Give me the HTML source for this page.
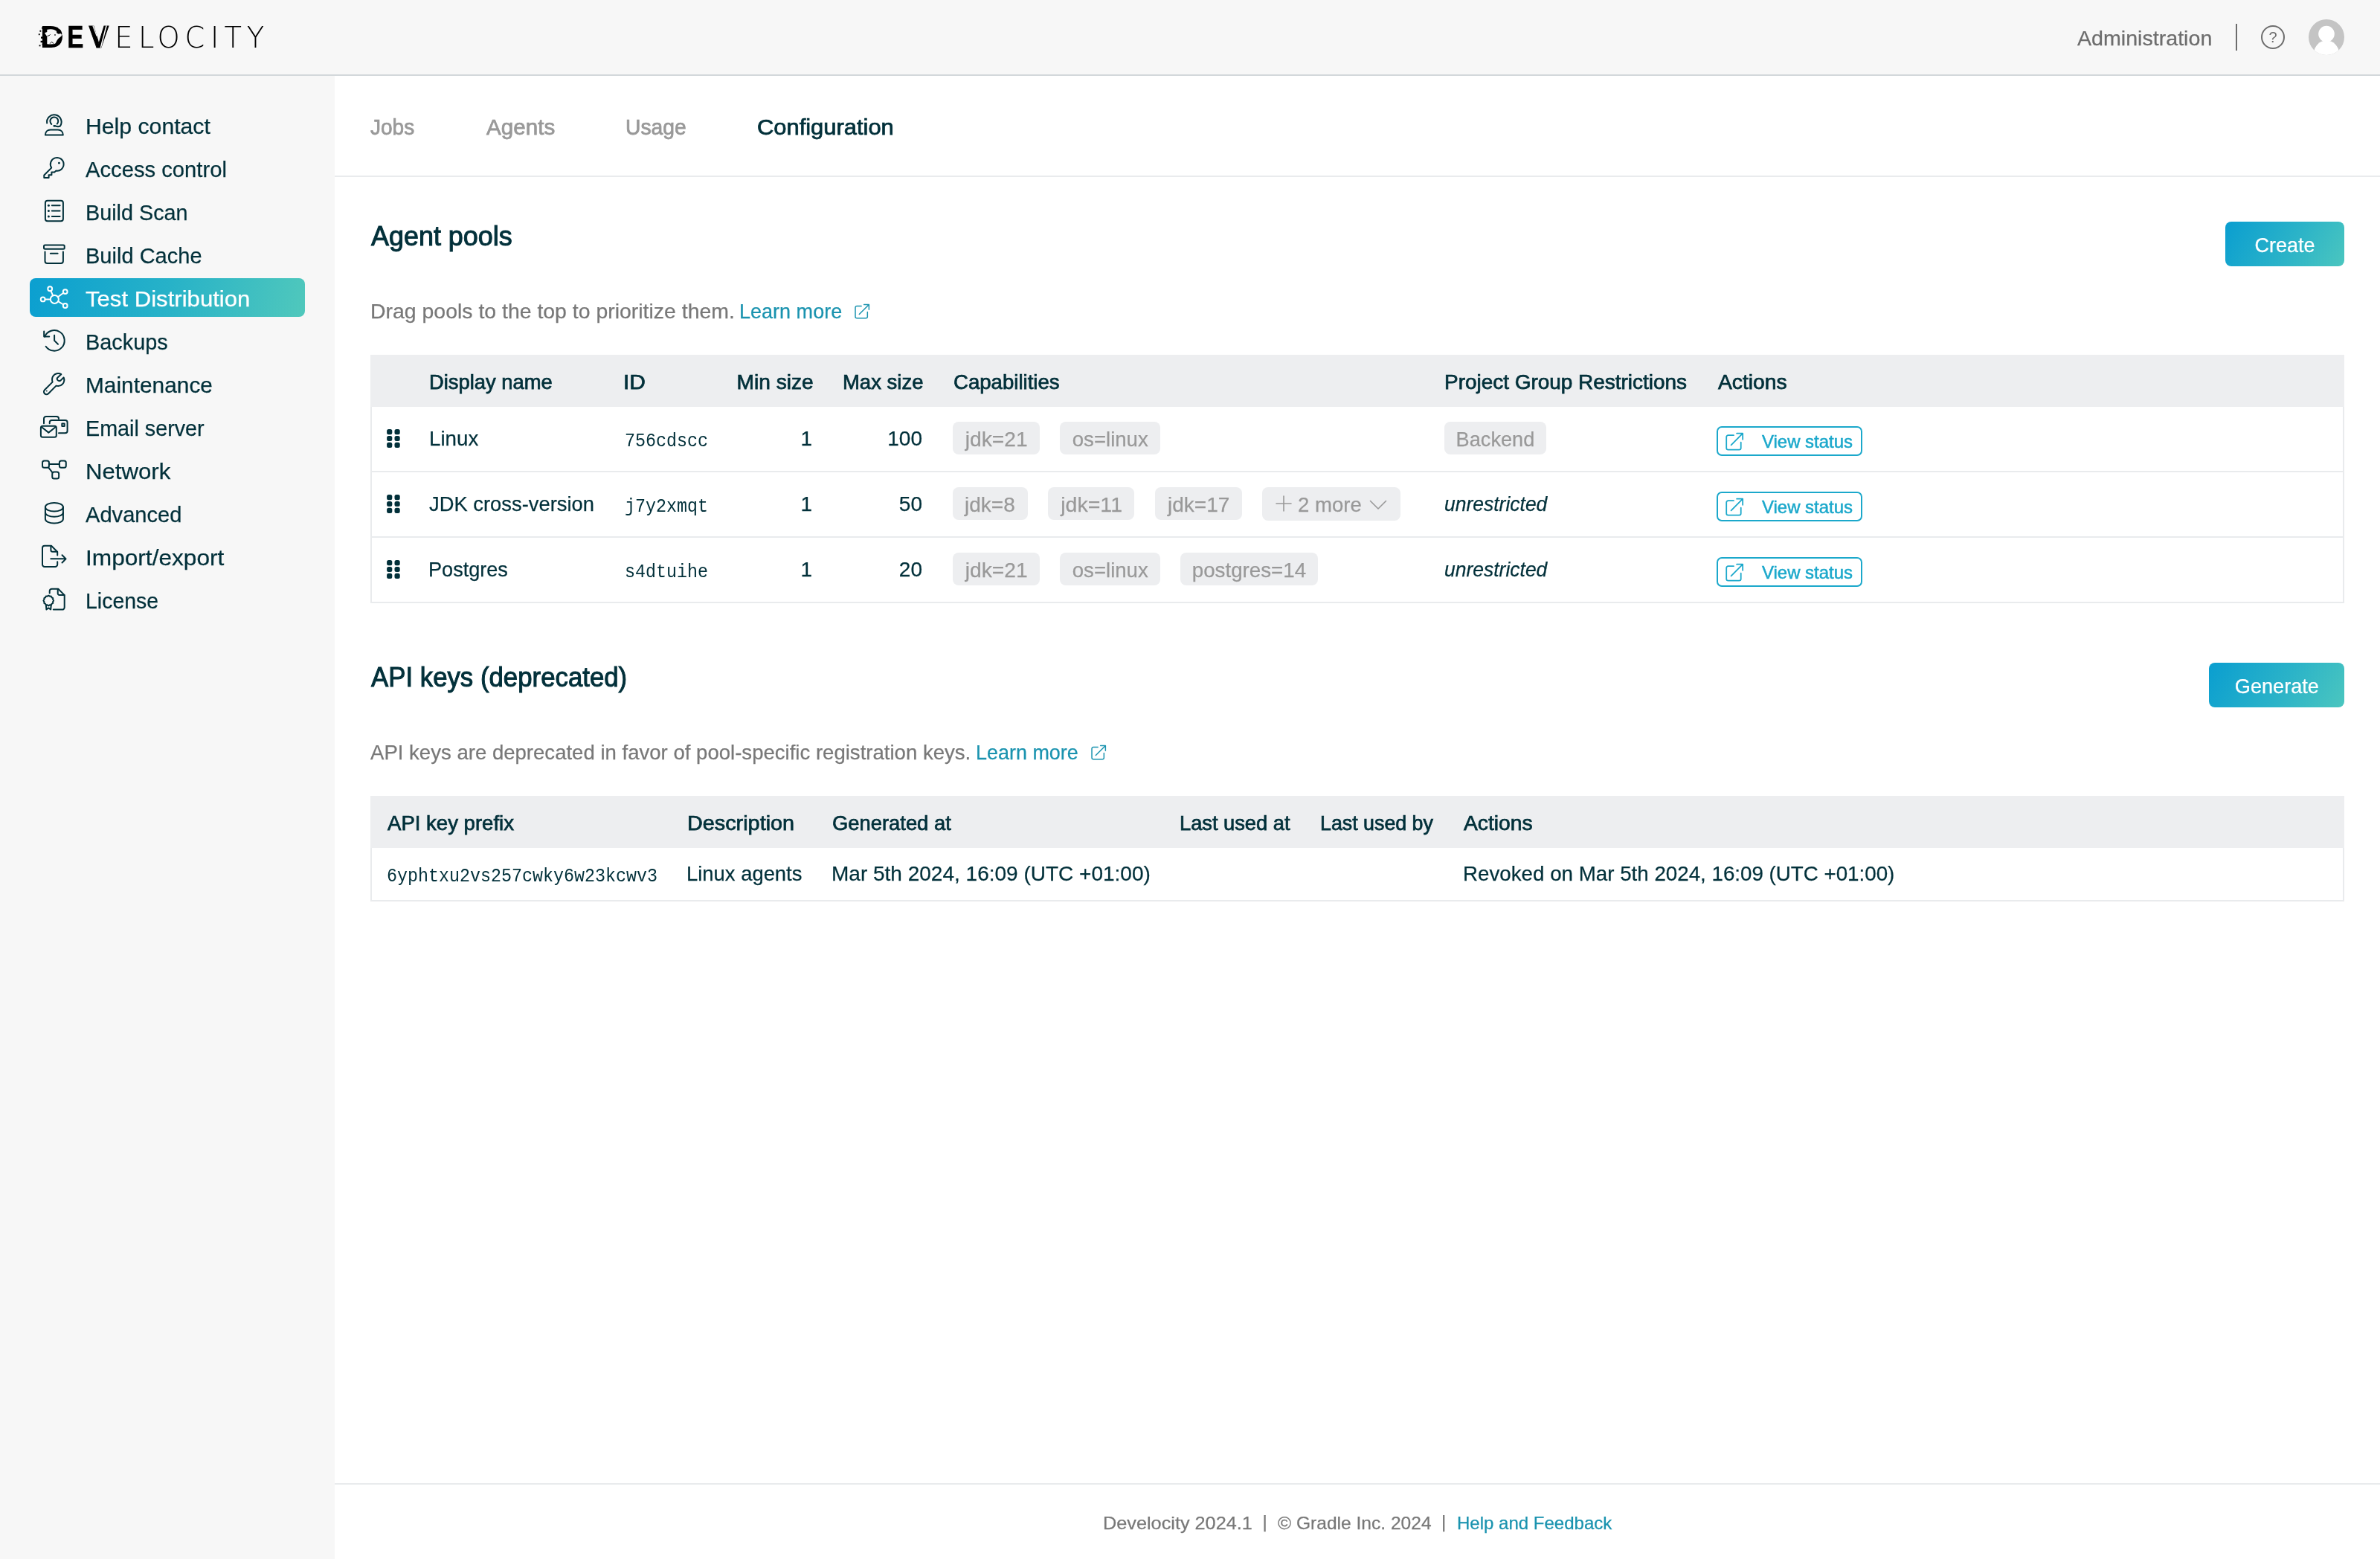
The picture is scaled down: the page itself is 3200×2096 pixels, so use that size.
<!DOCTYPE html>
<html lang="en">
<head>
<meta charset="utf-8">
<title>Test Distribution configuration | Develocity</title>
<style>
*{box-sizing:border-box;margin:0;padding:0}
html,body{width:3200px;height:2096px;overflow:hidden;background:#fff}
body{font-family:"Liberation Sans",sans-serif;color:#02303a;position:relative;font-size:28px;line-height:1;-webkit-text-stroke:0.25px}
a{color:inherit;text-decoration:none}
ul{list-style:none}
svg{display:block;overflow:visible}
/* promote the main regions so text is rasterised with greyscale anti-aliasing */
header.top,nav.side,main{will-change:transform}
.abs{position:absolute;white-space:nowrap}
.med{-webkit-text-stroke:0.75px currentColor}

/* header */
header.top{position:absolute;left:0;top:0;width:3200px;height:102px;background:#f7f7f7;border-bottom:2px solid #d3d8db}
.logo{position:absolute;left:40px;top:20px;width:330px;height:60px}
.admin{left:2793px;top:32px;font-size:28px;line-height:40px;color:#6d6d6d}
.vsep{position:absolute;left:3006px;top:32px;width:2px;height:36px;background:#6d6d6d}
.help{position:absolute;left:3040px;top:34px;width:32px;height:32px}
.avatar{position:absolute;left:3104px;top:26px;width:48px;height:48px}

/* sidebar */
nav.side{position:absolute;left:0;top:102px;width:450px;height:1994px;background:#f7f7f7}
nav.side li{position:absolute;left:40px;width:370px;height:52px;border-radius:8px}
nav.side li a{display:block;height:52px;position:relative}
nav.side li svg{position:absolute;left:13px;top:6px;width:40px;height:40px;fill:none;stroke:#02303a;stroke-width:2;stroke-linecap:round;stroke-linejoin:round}
nav.side li span{position:absolute;left:75px;top:0;font-size:30px;line-height:55px;white-space:nowrap}
nav.side li.active{background:linear-gradient(103deg,#0b9fd0 0%,#27b2c8 50%,#50c8bc 100%)}
nav.side li.active span{color:#fff}
nav.side li.active svg{stroke:#fff}

/* main */
main{position:absolute;left:450px;top:102px;width:2750px;height:1994px;background:#fff}
.tabs{position:absolute;left:0;top:0;width:2750px;height:136px;border-bottom:2px solid #e9ebed}
.tabs a{position:absolute;top:38.6px;font-size:30px;line-height:60px;color:#999;white-space:nowrap}
.tabs a.on{color:#02303a}

section{position:absolute;left:48px;width:2654px}
h2{position:absolute;left:0;font-size:36px;line-height:50px;font-weight:normal;white-space:nowrap;-webkit-text-stroke:1px #02303a}
.btn{position:absolute;right:0;height:60px;border-radius:8px;background:linear-gradient(120deg,#0a9ed0 0%,#2bb3c8 55%,#4bc6bf 100%);color:#fff;font-size:28px;line-height:64px;text-align:center;white-space:nowrap}
p.desc{position:absolute;left:0;width:2654px;height:40px;font-size:28px;line-height:40px;color:#787878;white-space:nowrap}
p.desc>span{position:absolute;left:-0.3px;top:0}
p.desc a{position:absolute;top:0}
p.desc a{color:#1a93af}
p.desc a.x{top:8.8px}
p.desc svg{width:20.4px;height:20.4px;fill:none;stroke:#1a93af;stroke-width:1.45;stroke-linecap:round;stroke-linejoin:round}

table{position:absolute;left:0;border-collapse:separate;border-spacing:0;table-layout:fixed;width:2654px;font-size:28px}
th{height:70px;background:#edeef0;text-align:left;font-weight:normal;-webkit-text-stroke:0.75px #02303a;padding:4px 0 0 20px;white-space:nowrap;vertical-align:middle;line-height:40px}
td{padding:0 0 0 20px;white-space:nowrap;vertical-align:middle;border-bottom:2px solid #e9ebed;line-height:40px}
td:first-child{border-left:2px solid #e9ebed}
td:last-child{border-right:2px solid #e9ebed}
th.num{text-align:right;padding:4px 20px 0 0}
td.num{text-align:right;padding:0 20px 0 0}
.mono{font-family:"Liberation Mono",monospace;font-size:25.4px;-webkit-text-stroke:0}
.mono .m{display:inline-block;transform:scaleX(.9186);transform-origin:0 50%}
td.mono{padding-top:7px}
.chip{display:inline-block;height:44px;border-radius:8px;background:#edeef0;color:#999;padding:0 16px;line-height:47px;margin-right:27.4px;vertical-align:middle;position:relative;top:-1px;white-space:nowrap}
.chip svg{display:inline-block}
i.un{font-style:italic}
.vs{display:inline-block;position:relative;top:2px;width:196px;height:40px;border:2px solid #1ba8cb;border-radius:7px;color:#1ba8cb;font-size:24px;vertical-align:middle;-webkit-text-stroke:0.5px #1ba8cb}
.vs svg{position:absolute;left:10px;top:6px;width:24.4px;height:24.4px;fill:none;stroke:#1ba8cb;stroke-width:1.45;stroke-linecap:round;stroke-linejoin:round}
.vs span{position:absolute;left:59.4px;top:0;line-height:37px;white-space:nowrap}
.grip{display:block;width:18px;height:25px;position:relative;top:-0.8px}

footer{position:absolute;left:0;top:1892px;width:2750px;height:102px;border-top:2px solid #e9ebed;font-size:24px;color:#787878;white-space:nowrap}
footer .abs{top:32px;line-height:40px}
footer .bar{top:30px}
footer a{color:#1a93af}
.chip{padding:0;text-align:center}
.chip.more{position:relative;text-align:left}
.t1 td{height:88px}
.t2 td{height:72px}
.t1 td.g{padding-left:20px}
.t1 td.caps{padding-left:21px}
</style>
</head>
<body>
<header class="top">
  <a class="logo" href="#" aria-label="Develocity">
    <svg width="330" height="60" viewBox="0 0 330 60">
      <g fill="#000" font-family="'Liberation Sans',sans-serif" font-weight="bold" font-size="42">
        <text transform="translate(14.1,43.9) scale(1.05,1)">D</text>
        <text transform="translate(50.3,43.9) scale(0.79,1)" stroke="#000" stroke-width="0.5">E</text>
        <text transform="translate(79.5,43.9) scale(0.955,1)" stroke="#000" stroke-width="1.1" stroke-linejoin="miter">V</text>
      </g>
      <!-- elephant cut-out inside the D -->
      <path d="M20 24.35 L25.2 22.2 L28.5 21.8 L32.2 22.7 L36.5 24.6 L38.8 25.8 L41.6 24.9 L43 26.7 L42.6 28.6 L38.8 31.4 L36.5 34.2 L34.6 38.3 L32.6 39.2 L24.9 39.2 L24.7 29.1 L22.8 28.6 Z" fill="#f7f7f7"/>
      <path d="M24.9 20.4 C28 19.6 30.8 19.9 33.2 20.9 C34.8 21.6 36 22.6 36.9 23.6" fill="none" stroke="#f7f7f7" stroke-width="1.2"/>
      <ellipse cx="39.1" cy="22.4" rx="2.9" ry="2.7" fill="#000"/>
      <path d="M38.4 17.9 C42.6 18 45.2 22.4 43.6 27.2" fill="none" stroke="#f7f7f7" stroke-width="0.9"/>
      <path d="M27.2 38.6 L29.4 36.3 L32.2 38.6" fill="none" stroke="#000" stroke-width="1"/>
      <path d="M23.6 28.4 C25.4 28.2 26.9 27.4 27.6 26.4" fill="none" stroke="#000" stroke-width="1"/>
      <circle cx="34" cy="26.9" r="0.95" fill="#222"/>
      <g fill="#000">
        <rect x="13.4" y="20.8" width="1.9" height="1.9"/><rect x="11.8" y="25.3" width="1.9" height="1.9"/>
        <rect x="15" y="29.4" width="2.4" height="2.4"/><rect x="14.6" y="34.8" width="2.6" height="2.4"/>
        <rect x="12.6" y="40.4" width="1.9" height="1.9"/><rect x="16.2" y="16.4" width="2" height="2.4"/>
        <rect x="17" y="22.6" width="1.6" height="2"/><rect x="16.6" y="38.6" width="1.6" height="2"/>
      </g>
      <!-- stripes in the V -->
      <path d="M84.9 14.4 L90.2 28.4" stroke="#f7f7f7" stroke-width="1.3" fill="none"/>
      <path d="M103.1 14.4 L95.3 44.4" stroke="#f7f7f7" stroke-width="1.6" fill="none"/>
      <g fill="#000" font-family="'DejaVu Sans',sans-serif" font-weight="200" font-size="38.4">
        <text x="114.2" y="43.8">E</text>
        <text x="145.9" y="43.8">L</text>
        <text x="171.6" y="43.8">O</text>
        <text x="208.4" y="43.8">C</text>
        <text x="242.9" y="43.8">I</text>
        <text x="261.5" y="43.8">T</text>
        <text x="291.7" y="43.8">Y</text>
      </g>
    </svg>
  </a>
  <a class="abs admin" href="#"><span style="display:inline-block;transform-origin:left 50%;transform:scaleX(1.0220)">Administration</span></a>
  <span class="vsep"></span>
  <a class="help" href="#" aria-label="Help">
    <svg width="32" height="32" viewBox="0 0 32 32">
      <circle cx="16" cy="16" r="15" fill="none" stroke="#6d6d6d" stroke-width="2"/>
      <text x="16" y="23" text-anchor="middle" font-family="'Liberation Sans',sans-serif" font-size="20" fill="#6d6d6d">?</text>
    </svg>
  </a>
  <a class="avatar" href="#" aria-label="User menu">
    <svg width="48" height="48" viewBox="0 0 48 48">
      <defs><clipPath id="av"><circle cx="24" cy="24" r="24"/></clipPath></defs>
      <circle cx="24" cy="24" r="24" fill="#c4c4c4"/>
      <g clip-path="url(#av)" fill="#fff">
        <circle cx="24" cy="19.6" r="10.8"/>
        <ellipse cx="24" cy="46" rx="17" ry="17.5"/>
      </g>
    </svg>
  </a>
</header>
<nav class="side" aria-label="Administration">
  <ul>
    <li style="top:40px"><a href="#"><svg viewBox="0 0 40 40" aria-hidden="true"><path d="M10.2 17.6 A9.75 9.75 0 1 1 27.9 21.5 C26.4 22.3 24.2 22.3 22.4 21.8"/><path d="M16.3 18.9 A5.4 5.4 0 1 1 23.8 18.5"/><ellipse cx="20.4" cy="21.3" rx="2.2" ry="1.4" fill="#02303a" stroke="none"/><path d="M7.9 33.6 C7.9 29.5 10.8 26.6 14.8 26.6 H24.9 C28.9 26.6 31.8 29.5 31.8 33.6 Z"/></svg><span style="display:inline-block;transform-origin:left 50%;transform:scaleX(1.0065)">Help contact</span></a></li>
    <li style="top:98px"><a href="#"><svg viewBox="0 0 40 40" aria-hidden="true"><path d="M16.2 19.6 L6.3 29.5 V33.1 H12.6 V29.2 H16.4 V25.6 H20.2 L22.2 23.6 A8.9 8.9 0 1 0 16.2 19.6 Z"/><circle cx="26.4" cy="13.2" r="1.4" fill="#02303a" stroke="none"/></svg><span style="display:inline-block;transform-origin:left 50%;transform:scaleX(0.9733)">Access control</span></a></li>
    <li style="top:156px"><a href="#"><svg viewBox="0 0 40 40" aria-hidden="true"><rect x="7.9" y="5.8" width="24" height="27.5" rx="3"/><path d="M16.8 12.2 H27.6 M16.8 19.6 H27.6 M16.8 27 H27.6"/><g fill="#02303a" stroke="none"><circle cx="12.4" cy="12.2" r="1.5"/><circle cx="12.4" cy="19.6" r="1.5"/><circle cx="12.4" cy="27" r="1.5"/></g></svg><span style="display:inline-block;transform-origin:left 50%;transform:scaleX(0.9589)">Build Scan</span></a></li>
    <li style="top:214px"><a href="#"><svg viewBox="0 0 40 40" aria-hidden="true"><rect x="6" y="7.6" width="27.7" height="5.1" rx="1.5"/><path d="M7.5 16.5 V28.9 A3 3 0 0 0 10.5 31.9 H28.9 A3 3 0 0 0 31.9 28.9 V16.5"/><path d="M14.8 18.8 H24.6"/></svg><span style="display:inline-block;transform-origin:left 50%;transform:scaleX(0.9681)">Build Cache</span></a></li>
    <li class="active" style="top:272px"><a href="#"><svg viewBox="0 0 40 40" aria-hidden="true"><circle cx="20.35" cy="22.4" r="5.5"/><circle cx="14.2" cy="8.25" r="2.9"/><circle cx="34.7" cy="12.1" r="2.9"/><circle cx="4.7" cy="22.4" r="2.9"/><circle cx="34.7" cy="31" r="2.9"/><path d="M18.16 17.36 L15.36 10.91 M24.82 19.19 L32.34 13.79 M14.85 22.4 H7.6 M25.07 25.23 L32.21 29.51"/></svg><span style="display:inline-block;transform-origin:left 50%;transform:scaleX(1.0372)">Test Distribution</span></a></li>
    <li style="top:330px"><a href="#"><svg viewBox="0 0 40 40" aria-hidden="true"><path d="M7.1 14.7 A13.8 13.8 0 1 1 8.6 27.75"/><path d="M6.2 7.4 V14.6 H13.2"/><path d="M20.1 12.7 V19.9 L25 24.7"/></svg><span style="display:inline-block;transform-origin:left 50%;transform:scaleX(0.9615)">Backups</span></a></li>
    <li style="top:388px"><a href="#"><svg viewBox="0 0 40 40" aria-hidden="true"><path d="M29.3 7.2 C25.6 5 20.8 6 18.4 9.6 C16.8 12 16.8 15 17.6 17.6 L7 28.2 A3.5 3.5 0 0 0 12 33.2 L22.5 22.6 C25.2 23.4 28.6 22.9 31 20.5 C33.4 18 33.8 14.4 32.6 11.5 L28.4 15.6 C27 16.6 25.1 16.1 24.2 14.8 C23.4 13.6 23.6 12.3 24.6 11.5 Z"/><circle cx="9.8" cy="29.6" r="0.9" fill="#02303a" stroke="none"/></svg><span style="display:inline-block;transform-origin:left 50%;transform:scaleX(0.9950)">Maintenance</span></a></li>
    <li style="top:446px"><a href="#"><svg viewBox="0 0 40 40" aria-hidden="true"><path d="M6 15.2 V8.9 A3 3 0 0 1 9 5.9 H23 A3 3 0 0 1 26 8.9"/><path d="M13.7 15.2 V14 A3 3 0 0 1 16.7 11 H34.6 A3 3 0 0 1 37.6 14 V25.3 A3 3 0 0 1 34.6 28.3 H26"/><rect x="30.3" y="15.5" width="3.4" height="3.4" rx="0.2" stroke-linejoin="miter"/><rect x="1.9" y="18.7" width="20.9" height="15.1" rx="2.5"/><path d="M2.8 20 L12.3 27.6 L21.9 20"/></svg><span style="display:inline-block;transform-origin:left 50%;transform:scaleX(0.9577)">Email server</span></a></li>
    <li style="top:504px"><a href="#"><svg viewBox="0 0 40 40" aria-hidden="true"><rect x="4.04" y="7.55" width="8.9" height="9.1" rx="2.5"/><rect x="26.87" y="7.55" width="8.9" height="9.1" rx="2.5"/><rect x="17.25" y="22.56" width="8.9" height="9" rx="2.5"/><path d="M12.94 12.1 H26.87 M12.2 16.7 L17.6 23.4"/></svg><span style="display:inline-block;transform-origin:left 50%;transform:scaleX(1.0388)">Network</span></a></li>
    <li style="top:562px"><a href="#"><svg viewBox="0 0 40 40" aria-hidden="true"><ellipse cx="19.9" cy="11.75" rx="12" ry="5.75"/><path d="M7.9 11.75 V27.75 A12 5.75 0 0 0 31.9 27.75 V11.75"/><path d="M7.9 19 A12 5.75 0 0 0 31.9 19"/></svg><span style="display:inline-block;transform-origin:left 50%;transform:scaleX(0.9697)">Advanced</span></a></li>
    <li style="top:620px"><a href="#"><svg viewBox="0 0 40 40" aria-hidden="true"><path d="M24.2 18.4 V14 L16 5.75 H7 A3 3 0 0 0 4 8.75 V30.9 A3 3 0 0 0 7 33.9 H21.2 A3 3 0 0 0 24.2 30.9 V27.2"/><path d="M15.4 6 V11.5 A2.2 2.2 0 0 0 17.6 13.7 H24"/><path d="M15.3 23.35 H35.4 M30.5 18.2 L35.6 23.35 L30.5 28.5"/></svg><span style="display:inline-block;transform-origin:left 50%;transform:scaleX(1.0542)">Import/export</span></a></li>
    <li style="top:678px"><a href="#"><svg viewBox="0 0 40 40" aria-hidden="true"><path d="M13.7 11.6 V8.7 A3 3 0 0 1 16.7 5.7 H25.3 L33.7 14.1 V30.6 A3 3 0 0 1 30.7 33.6 H18.8"/><path d="M24.7 6 V11.8 A2.2 2.2 0 0 0 26.9 14 H33.4"/><path d="M19.12 21.53 L18.11 23.10 L18.20 24.96 L16.55 25.81 L15.70 27.46 L13.84 27.37 L12.27 28.38 L10.70 27.37 L8.85 27.46 L7.99 25.81 L6.34 24.96 L6.43 23.10 L5.42 21.53 L6.43 19.96 L6.34 18.11 L7.99 17.25 L8.84 15.60 L10.70 15.69 L12.27 14.68 L13.84 15.69 L15.70 15.60 L16.55 17.25 L18.20 18.10 L18.11 19.96 Z"/><path d="M8.9 27.8 L9.4 33.5 L12.3 31.4 L15.2 33.5 L15.7 27.8"/></svg><span style="display:inline-block;transform-origin:left 50%;transform:scaleX(0.9492)">License</span></a></li>
  </ul>
</nav>
<main>
  <div class="tabs" role="tablist">
    <a class="med" href="#" style="left:48px"><span style="display:inline-block;transform-origin:left 50%;transform:scaleX(0.9348)">Jobs</span></a>
    <a class="med" href="#" style="left:204.4px"><span style="display:inline-block;transform-origin:left 50%;transform:scaleX(0.9870)">Agents</span></a>
    <a class="med" href="#" style="left:391.2px"><span style="display:inline-block;transform-origin:left 50%;transform:scaleX(0.9425)">Usage</span></a>
    <a class="med on" href="#" style="left:568.2px"><span style="display:inline-block;transform-origin:left 50%;transform:scaleX(1.0298)">Configuration</span></a>
  </div>
  <section class="pools" style="top:0">
    <h2 style="top:190.5px;left:1px"><span style="display:inline-block;transform-origin:left 50%;transform:scaleX(0.9979)">Agent pools</span></h2>
    <a class="btn" href="#" style="top:196px;width:160px"><span style="display:inline-block;transform-origin:center 50%;transform:scaleX(0.9640)">Create</span></a>
    <p class="desc" style="top:296.8px"><span style="display:inline-block;transform-origin:left 50%;transform:scaleX(1.0153)">Drag pools to the top to prioritize them.</span><a href="#" style="left:496.3px"><span style="display:inline-block;transform-origin:left 50%;transform:scaleX(0.9651)">Learn more</span></a><a href="#" aria-hidden="true" class="x" style="left:651px"><svg viewBox="0 0 20 20" aria-hidden="true"><path d="M9 3.4 H3 A2 2 0 0 0 1 5.4 V17.4 A2 2 0 0 0 3 19.4 H15 A2 2 0 0 0 17 17.4 V11.2"/><path d="M6.2 14.2 L19 1.4 M12.4 1.4 H19 V8"/></svg></a></p>
    <table class="t1" style="top:375px">
      <colgroup><col style="width:58.5px"><col style="width:263px"><col style="width:152px"><col style="width:140.5px"><col style="width:148px"><col style="width:662px"><col style="width:366px"><col style="width:864px"></colgroup>
      <thead><tr><th></th><th><span style="position:relative;left:0.6px;display:inline-block;transform-origin:left 50%;transform:scaleX(0.9772)">Display name</span></th><th><span style="position:relative;left:-1.5px;display:inline-block;transform-origin:left 50%;transform:scaleX(1.0694)">ID</span></th><th class="num"><span style="position:relative;left:1.6px;display:inline-block;transform-origin:right 50%;transform:scaleX(1.0038)">Min size</span></th><th class="num"><span style="position:relative;left:1.0px;display:inline-block;transform-origin:right 50%;transform:scaleX(0.9824)">Max size</span></th><th><span style="position:relative;left:1.6px;display:inline-block;transform-origin:left 50%;transform:scaleX(0.9850)">Capabilities</span></th><th><span style="display:inline-block;transform-origin:left 50%;transform:scaleX(0.9976)">Project Group Restrictions</span></th><th><span style="position:relative;left:1.8px;display:inline-block;transform-origin:left 50%;transform:scaleX(1.0086)">Actions</span></th></tr></thead>
      <tbody>
        <tr><td class="g"><svg class="grip" viewBox="0 0 18 25" aria-hidden="true"><g fill="#02303a"><rect x="0.1" y="0" width="7.2" height="7.2" rx="2.5"/><rect x="10.5" y="0" width="7.2" height="7.2" rx="2.5"/><rect x="0.1" y="8.9" width="7.2" height="7.2" rx="2.5"/><rect x="10.5" y="8.9" width="7.2" height="7.2" rx="2.5"/><rect x="0.1" y="17.8" width="7.2" height="7.2" rx="2.5"/><rect x="10.5" y="17.8" width="7.2" height="7.2" rx="2.5"/></g></svg></td><td><span style="display:inline-block;transform-origin:left 50%;transform:scaleX(0.9894)">Linux</span></td><td class="mono"><span class="m">756cdscc</span></td><td class="num">1</td><td class="num">100</td><td class="caps"><span class="chip" style="width:116.5px"><span style="display:inline-block;transform-origin:center 50%;transform:scaleX(1.0064)">jdk=21</span></span><span class="chip" style="width:134.75px"><span style="display:inline-block;transform-origin:center 50%;transform:scaleX(0.9853)">os=linux</span></span></td><td class="pgr"><span class="chip" style="width:136.5px"><span style="display:inline-block;transform-origin:center 50%;transform:scaleX(0.9702)">Backend</span></span></td><td class="act"><a class="vs" href="#"><svg viewBox="0 0 20 20" aria-hidden="true"><path d="M9 3.4 H3 A2 2 0 0 0 1 5.4 V17.4 A2 2 0 0 0 3 19.4 H15 A2 2 0 0 0 17 17.4 V11.2"/><path d="M6.2 14.2 L19 1.4 M12.4 1.4 H19 V8"/></svg><span style="display:inline-block;transform-origin:left 50%;transform:scaleX(0.9977)">View status</span></a></td></tr>
        <tr><td class="g"><svg class="grip" viewBox="0 0 18 25" aria-hidden="true"><g fill="#02303a"><rect x="0.1" y="0" width="7.2" height="7.2" rx="2.5"/><rect x="10.5" y="0" width="7.2" height="7.2" rx="2.5"/><rect x="0.1" y="8.9" width="7.2" height="7.2" rx="2.5"/><rect x="10.5" y="8.9" width="7.2" height="7.2" rx="2.5"/><rect x="0.1" y="17.8" width="7.2" height="7.2" rx="2.5"/><rect x="10.5" y="17.8" width="7.2" height="7.2" rx="2.5"/></g></svg></td><td><span style="position:relative;left:0.8px;display:inline-block;transform-origin:left 50%;transform:scaleX(0.9770)">JDK cross-version</span></td><td class="mono"><span class="m">j7y2xmqt</span></td><td class="num">1</td><td class="num">50</td><td class="caps"><span class="chip" style="width:100.5px"><span style="display:inline-block;transform-origin:center 50%;transform:scaleX(1.0015)">jdk=8</span></span><span class="chip" style="width:116.5px"><span style="display:inline-block;transform-origin:center 50%;transform:scaleX(1.0197)">jdk=11</span></span><span class="chip" style="width:116.75px"><span style="display:inline-block;transform-origin:center 50%;transform:scaleX(1.0004)">jdk=17</span></span><span class="chip more" style="width:186.4px;height:45px"><svg width="22" height="22" viewBox="0 0 22 22" style="position:absolute;left:17.6px;top:11.6px" aria-hidden="true"><path d="M11 1 V21 M1 11 H21" fill="none" stroke="#999" stroke-width="1.6" stroke-linecap="round"/></svg><span style="position:absolute;left:48.2px;top:0;display:inline-block;transform-origin:left 50%;transform:scaleX(0.9845)">2 more</span><svg width="24" height="14" viewBox="0 0 24 14" style="position:absolute;left:144.4px;top:17.8px" aria-hidden="true"><path d="M1.5 1.5 L12 12 L22.5 1.5" fill="none" stroke="#999" stroke-width="1.6" stroke-linecap="round" stroke-linejoin="round"/></svg></span></td><td class="pgr"><i class="un" style="display:inline-block;transform-origin:left 50%;transform:scaleX(0.9457)">unrestricted</i></td><td class="act"><a class="vs" href="#"><svg viewBox="0 0 20 20" aria-hidden="true"><path d="M9 3.4 H3 A2 2 0 0 0 1 5.4 V17.4 A2 2 0 0 0 3 19.4 H15 A2 2 0 0 0 17 17.4 V11.2"/><path d="M6.2 14.2 L19 1.4 M12.4 1.4 H19 V8"/></svg><span style="display:inline-block;transform-origin:left 50%;transform:scaleX(0.9977)">View status</span></a></td></tr>
        <tr><td class="g"><svg class="grip" viewBox="0 0 18 25" aria-hidden="true"><g fill="#02303a"><rect x="0.1" y="0" width="7.2" height="7.2" rx="2.5"/><rect x="10.5" y="0" width="7.2" height="7.2" rx="2.5"/><rect x="0.1" y="8.9" width="7.2" height="7.2" rx="2.5"/><rect x="10.5" y="8.9" width="7.2" height="7.2" rx="2.5"/><rect x="0.1" y="17.8" width="7.2" height="7.2" rx="2.5"/><rect x="10.5" y="17.8" width="7.2" height="7.2" rx="2.5"/></g></svg></td><td><span style="position:relative;left:-1.0px;display:inline-block;transform-origin:left 50%;transform:scaleX(0.9675)">Postgres</span></td><td class="mono"><span class="m">s4dtuihe</span></td><td class="num">1</td><td class="num">20</td><td class="caps"><span class="chip" style="width:116.5px"><span style="display:inline-block;transform-origin:center 50%;transform:scaleX(1.0064)">jdk=21</span></span><span class="chip" style="width:134.75px"><span style="display:inline-block;transform-origin:center 50%;transform:scaleX(0.9853)">os=linux</span></span><span class="chip" style="width:184.5px"><span style="display:inline-block;transform-origin:center 50%;transform:scaleX(0.9898)">postgres=14</span></span></td><td class="pgr"><i class="un" style="display:inline-block;transform-origin:left 50%;transform:scaleX(0.9457)">unrestricted</i></td><td class="act"><a class="vs" href="#"><svg viewBox="0 0 20 20" aria-hidden="true"><path d="M9 3.4 H3 A2 2 0 0 0 1 5.4 V17.4 A2 2 0 0 0 3 19.4 H15 A2 2 0 0 0 17 17.4 V11.2"/><path d="M6.2 14.2 L19 1.4 M12.4 1.4 H19 V8"/></svg><span style="display:inline-block;transform-origin:left 50%;transform:scaleX(0.9977)">View status</span></a></td></tr>
      </tbody>
    </table>
  </section>
  <section class="keys" style="top:593px">
    <h2 style="top:190.5px;left:1px"><span style="display:inline-block;transform-origin:left 50%;transform:scaleX(0.9663)">API keys (deprecated)</span></h2>
    <a class="btn" href="#" style="top:196px;width:182px"><span style="display:inline-block;transform-origin:center 50%;transform:scaleX(0.9681)">Generate</span></a>
    <p class="desc" style="top:296.8px"><span style="display:inline-block;transform-origin:left 50%;transform:scaleX(0.9842)">API keys are deprecated in favor of pool-specific registration keys.</span><a href="#" style="left:814.4px"><span style="display:inline-block;transform-origin:left 50%;transform:scaleX(0.9622)">Learn more</span></a><a href="#" aria-hidden="true" class="x" style="left:969px"><svg viewBox="0 0 20 20" aria-hidden="true"><path d="M9 3.4 H3 A2 2 0 0 0 1 5.4 V17.4 A2 2 0 0 0 3 19.4 H15 A2 2 0 0 0 17 17.4 V11.2"/><path d="M6.2 14.2 L19 1.4 M12.4 1.4 H19 V8"/></svg></a></p>
    <table class="t2" style="top:375px">
      <colgroup><col style="width:405.5px"><col style="width:194px"><col style="width:468px"><col style="width:188.5px"><col style="width:192.5px"><col style="width:1205.5px"></colgroup>
      <thead><tr><th><span style="position:relative;left:3.3px;display:inline-block;transform-origin:left 50%;transform:scaleX(0.9842)">API key prefix</span></th><th><span style="display:inline-block;transform-origin:left 50%;transform:scaleX(1.0287)">Description</span></th><th><span style="position:relative;left:1.0px;display:inline-block;transform-origin:left 50%;transform:scaleX(0.9775)">Generated at</span></th><th><span style="position:relative;left:0.4px;display:inline-block;transform-origin:left 50%;transform:scaleX(0.9733)">Last used at</span></th><th><span style="position:relative;left:0.6px;display:inline-block;transform-origin:left 50%;transform:scaleX(0.9568)">Last used by</span></th><th><span style="position:relative;left:1.8px;display:inline-block;transform-origin:left 50%;transform:scaleX(1.0086)">Actions</span></th></tr></thead>
      <tbody>
        <tr><td class="mono"><span class="m">6yphtxu2vs257cwky6w23kcwv3</span></td><td><span style="position:relative;left:-1.0px;display:inline-block;transform-origin:left 50%;transform:scaleX(0.9789)">Linux agents</span></td><td><span style="display:inline-block;transform-origin:left 50%;transform:scaleX(1.0001)">Mar 5th 2024, 16:09 (UTC +01:00)</span></td><td></td><td></td><td><span style="display:inline-block;transform-origin:left 50%;transform:scaleX(0.9903)">Revoked on Mar 5th 2024, 16:09 (UTC +01:00)</span></td></tr>
      </tbody>
    </table>
  </section>
  <footer>
    <span class="abs" style="left:1032.6px"><span style="display:inline-block;transform-origin:left 50%;transform:scaleX(1.0526)">Develocity 2024.1</span></span>
    <span class="abs bar" style="left:1247.4px">|</span>
    <span class="abs" style="left:1267.9px"><span style="display:inline-block;transform-origin:left 50%;transform:scaleX(1.0236)">© Gradle Inc. 2024</span></span>
    <span class="abs bar" style="left:1487.9px">|</span>
    <a class="abs" href="#" style="left:1508.6px"><span style="display:inline-block;transform-origin:left 50%;transform:scaleX(1.0008)">Help and Feedback</span></a>
  </footer>
</main>
<script>
/* The layout is authored in device pixels (3200x2096). On a high-DPI viewport (e.g. 1600x1048 at 2x) scale it back so one layout pixel is one device pixel. */
(function(){var r=window.devicePixelRatio||1;if(Math.abs(r-1)>0.01){var k=1/r,h=document.documentElement,b=document.body;h.style.width=(3200*k)+'px';h.style.height=(2096*k)+'px';b.style.transformOrigin='0 0';b.style.transform='scale('+k+')';}})();
</script>
</body>
</html>
